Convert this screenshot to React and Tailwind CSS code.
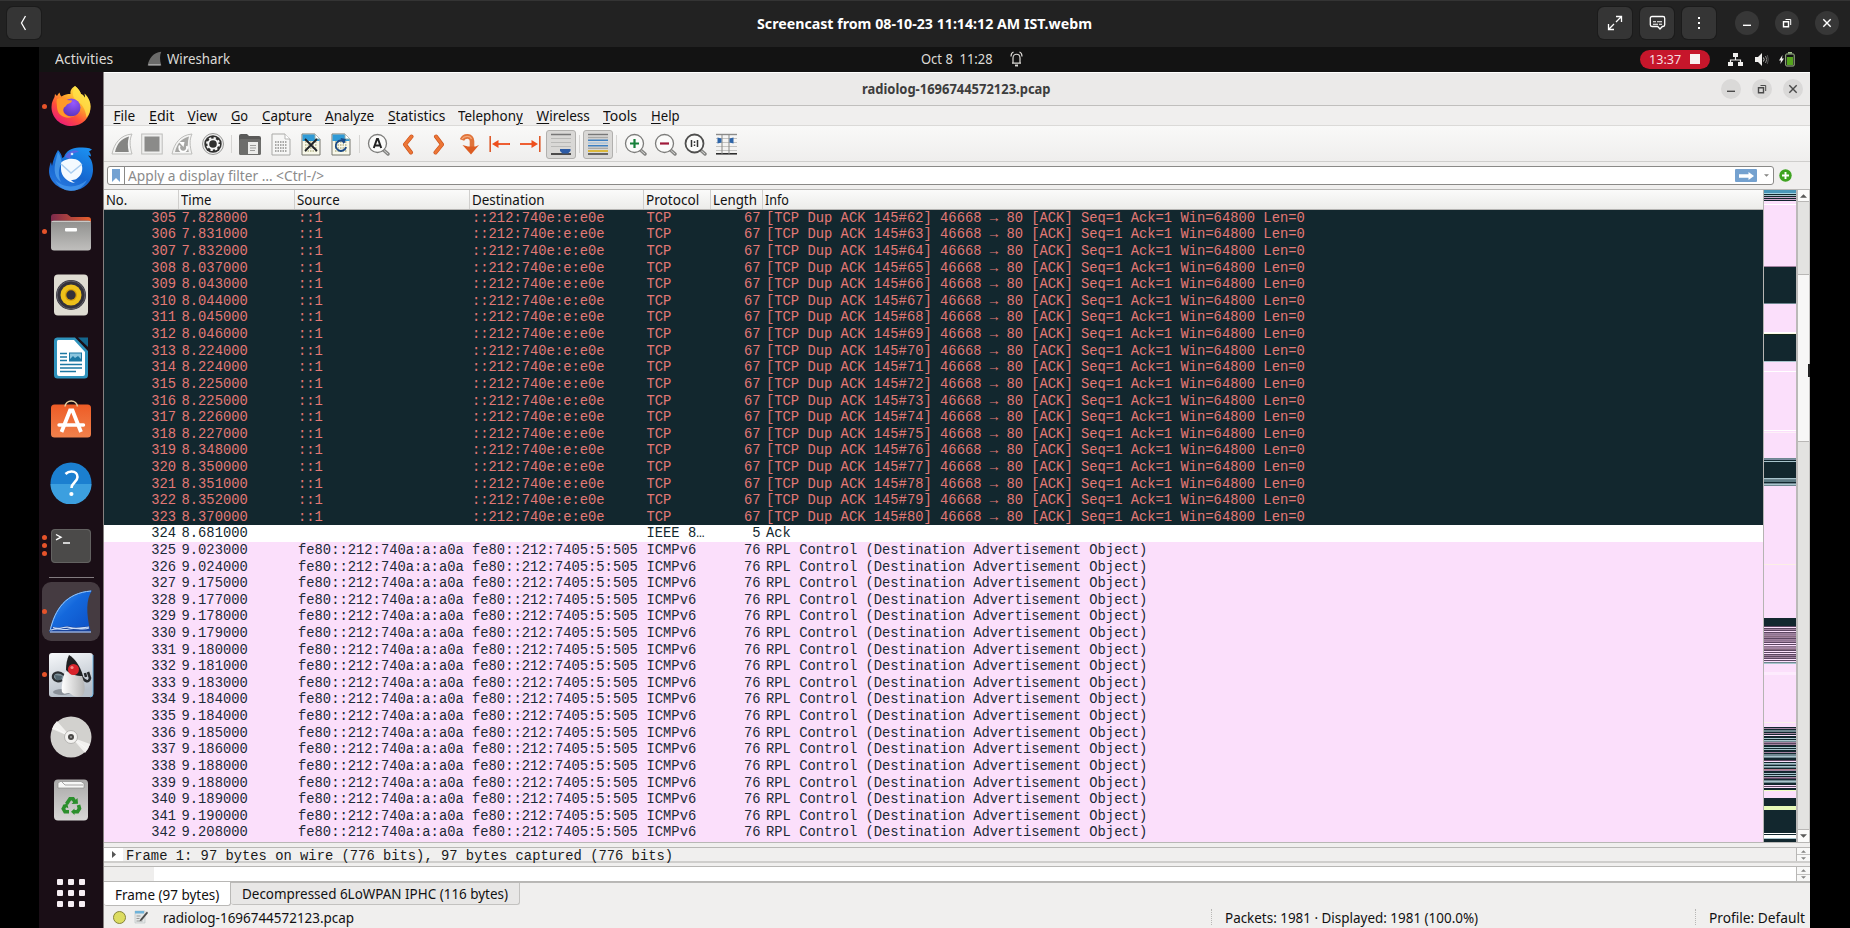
import { useLayoutEffect, useRef, useState } from "react";

/* Text squeezed or stretched to a fixed width. */
function Fit({ w, className = "", children }) {
  const ref = useRef(null);
  const [scale, setScale] = useState(1);
  useLayoutEffect(() => {
    const natural = ref.current.offsetWidth;
    if (natural > 0) setScale(w / natural);
  }, [w]);
  return (
    <span className={"block shrink-0 whitespace-pre " + className} style={{ width: w }}>
      <span ref={ref} className="inline-block origin-left whitespace-pre" style={{ transform: `scaleX(${scale})` }}>
        {children}
      </span>
    </span>
  );
}

/* ---------- packet data ---------- */
const tcpTimes = [
  "7.828000", "7.831000", "7.832000", "8.037000", "8.043000", "8.044000", "8.045000", "8.046000", "8.224000", "8.224000",
  "8.225000", "8.225000", "8.226000", "8.227000", "8.348000", "8.350000", "8.351000", "8.352000", "8.370000",
];
const rplTimes = [
  "9.023000", "9.024000", "9.175000", "9.177000", "9.178000", "9.179000", "9.180000", "9.181000", "9.183000",
  "9.184000", "9.184000", "9.185000", "9.186000", "9.188000", "9.188000", "9.189000", "9.190000", "9.208000",
];
const rows = [
  ...tcpTimes.map((t, i) => ({
    no: 305 + i, t, src: "::1", dst: "::212:740e:e:e0e", p: "TCP", len: 67, kind: "tcp",
    pre: `[TCP Dup ACK 145#${62 + i}] 46668 `, post: " 80 [ACK] Seq=1 Ack=1 Win=64800 Len=0",
  })),
  { no: 324, t: "8.681000", src: "", dst: "", p: "IEEE 8", len: 5, kind: "ack", pre: "Ack" },
  ...rplTimes.map((t, i) => ({
    no: 325 + i, t, src: "fe80::212:740a:a:a0a", dst: "fe80::212:7405:5:505", p: "ICMPv6", len: 76, kind: "rpl",
    pre: "RPL Control (Destination Advertisement Object)",
  })),
];
const rowTone = {
  tcp: "bg-[#12272e] text-[#e27976]",
  ack: "bg-white text-[#12272e]",
  rpl: "bg-[#fbdffb] text-[#1c2a38]",
};

function Row({ r }) {
  return (
    <div className={"grid h-[16.61px] shrink-0 grid-cols-[74px_116px_175px_174px_68px_51px_1fr] items-center pt-px font-['Liberation_Mono',monospace] text-[13.82px] leading-[15px] whitespace-pre " + rowTone[r.kind]}>
      <span className="pr-[2px] text-right">{r.no}</span>
      <span className="pl-[3.5px]">{r.t}</span>
      <span className="pl-[4px]">{r.src}</span>
      <span className="pl-[3px]">{r.dst}</span>
      <span className="pl-[3.5px]">{r.p}{r.kind === "ack" && "…"}</span>
      <span className="pr-[1.500px] text-right">{r.len}</span>
      <span className="pl-[4px]">
        {r.pre}
        {r.kind === "tcp" && <span className="inline-block w-[8.29px] text-center">→</span>}
        {r.post}
      </span>
    </div>
  );
}

/* ---------- minimap ---------- */
const D = "#12272e", P = "#fbdffb", W = "#ffffff", G = "#6e8790", T = "#a8c4cc", M = "#a283a0", K = "#5c4661";
const bands = [
  [0, 3, "#4996b8"], [3, 1, "#a5d3e0"], [4, 1, D], [5, 1, T], [6, 1, D], [7, 1, "#caa8cb"], [8, 1, D], [9, 1, "#caa8cb"], [10, 1, D],
  [14, 1, W], [76, 1, M], [77, 36, D], [113, 1, G], [142, 1, W], [143, 1, "#fffbe8"], [144, 1, "#14281a"], [145, 15, D], [145, 26, D],
  [171, 1, T], [181, 1, W], [240, 1, W], [242, 1, "#fdf0f8"], [268, 1, G], [269, 1, "#7a8ba0"], [270, 1, D], [271, 1, T], [272, 15, D],
  [287, 1, D], [288, 1, T], [289, 1, G], [290, 2, "#5c7a82"], [292, 1, D], [293, 1, G], [294, 1, T], [295, 1, G], [374, 1, "#fbefe6"],
  [428, 8, D], [472, 1, G], [473, 1, T], [482, 3, "#fdebfd"], [532, 1, "#f8f2e8"],
  [600, 1, "#ecffc0"], [608, 8, D], [616, 4, "#e5f9b8"], [620, 23, D], [643, 1, W], [644, 1, D], [645, 3, W], [648, 1, T], [649, 3, D],
];
const seqA = [K, P, K, M, K, P, K, M, "#8f7591", M, "#85697f", M, K, M, "#8f7591", M, K, P, K, P, "#8f7591", M, M, "#85697f", K, P, K, P, K, M, K, M, K, P, K, P];
const seqB = [
  D, M, D, G, G, D, M, D, P, D, D, T, D, T, G, M, K, M, D, D, T, D, T, D, D, M, D, G, G, T, G, D,
  D, K, P, D, T, G, D, T, G, D, "#b27d8d", M, D, D, T, D, T, D, M, K, D, G, T, G, D, D, P, K, P, D, D,
];

function Minimap() {
  return (
    <svg className="block h-[652px] w-[32px]" viewBox="0 0 32 652" shapeRendering="crispEdges">
      <rect width="32" height="652" fill={P} />
      {bands.map(([y, h, c], i) => <rect key={i} y={y} width="32" height={h} fill={c} />)}
      {seqA.map((c, i) => <rect key={"a" + i} y={436 + i} width="32" height="1" fill={c} />)}
      {seqB.map((c, i) => <rect key={"b" + i} y={537 + i} width="32" height="1" fill={c} />)}
    </svg>
  );
}

/* ---------- dock icons ---------- */
const Firefox = () => (
  <svg width="42" height="42" viewBox="0 0 42 42">
    <defs>
      <linearGradient id="ff1" x1=".85" y1=".1" x2=".25" y2="1">
        <stop offset="0" stopColor="#fff04a" /><stop offset=".35" stopColor="#ffab2c" /><stop offset=".65" stopColor="#ff5038" /><stop offset="1" stopColor="#e8187c" />
      </linearGradient>
      <radialGradient id="ff2" cx=".6" cy=".25" r=".8"><stop offset="0" stopColor="#9659ff" /><stop offset="1" stopColor="#5a32b8" /></radialGradient>
    </defs>
    <path d="M25 1c3 2 5 5 6 8 3 1 4 4 4 4 0-2 0-3-.5-4.500 4 4 6 8 6 13 0 11-8 19.500-19 19.500S1.500 33 1.500 22c0-5 2-8 3-10L5 9l2 2c1-2 2-3 2.500-3.500.5 2 1 3 2 4 3-2 6-2.500 9-2.500C20 5 22 3 25 1z" fill="url(#ff1)" />
    <path d="M25 1c3 2 5 5 6 8 3 1 4 4 4 4 0-2 0-3-.5-4.500 4 4 6 8 6 13 0 4-1 8-4 11-1-9-5-14-10-17-5-3-4-10-1.500-14.500z" fill="#ffe14a" opacity=".75" />
    <circle cx="21.500" cy="22.500" r="9" fill="url(#ff2)" />
    <path d="M7 14c3-2 8-1 10 1l5 .5c0 2-3 3-5 4-1 1-1 2-3 3-3 6 4 11 11 8-5 4-17 3-18-8 0-3-1-6 0-8.500z" fill="#ff9a28" />
  </svg>
);

const Thunderbird = () => (
  <svg width="46" height="46" viewBox="0 0 46 46">
    <defs><linearGradient id="tb" x1=".8" y1="0" x2=".3" y2="1"><stop offset="0" stopColor="#1b8ff0" /><stop offset=".6" stopColor="#1566cf" /><stop offset="1" stopColor="#2a7ae0" /></linearGradient></defs>
    <path d="M10 4c2 2 4 5 4 8l2-1c2-6 8-9.500 15-9.500 5 0 10 0 13 2l-3 2c1 1 2 3 2 5-1-.5-2-1-3-1 4 4 5 9 5 14 0 12-9 21-21 21S1 36 1 25c0-3 1-7 2-9l1 4c1-6 3-11 6-16z" fill="url(#tb)" />
    <path d="M8 14c-3 10-1 18 5 22-3-6-3-14 1-19-1-5-2-8-4-11z" fill="#5aaaf2" opacity=".65" />
    <path d="M17 11c3-6 10-8 14-5-6 0-9 4-9 7z" fill="#6a5fe0" opacity=".8" />
    <circle cx="24" cy="8" r="1.300" fill="#cfe8ff" />
    <path d="M13 17c3-4 13-6 18-2 4 3 4 9 2 13-3 5-6 6-10 6 1 1 2 2 4 3-8-1-14-7-14-14z" fill="#f4faff" />
    <path d="M13 18l10 9 11-9" fill="none" stroke="#a9cdf0" strokeWidth="1.500" />
    <path d="M7 34c8 8 22 9 32 0-4 8-11 11-16 11S11 42 7 34z" fill="#4a9df0" opacity=".7" />
  </svg>
);

const Files = () => (
  <svg width="42" height="42" viewBox="0 0 42 42">
    <defs><linearGradient id="fo" x2="1"><stop offset="0" stopColor="#7c2a4c" /><stop offset="1" stopColor="#e8602c" /></linearGradient>
      <linearGradient id="fg" y2="1" x2="0"><stop offset="0" stopColor="#8f8f8d" /><stop offset="1" stopColor="#c0bfbd" /></linearGradient></defs>
    <path d="M1 6a3 3 0 013-3h13l4 3h17a3 3 0 013 3v16H1z" fill="url(#fo)" />
    <rect x="1" y="9.500" width="40" height="30" rx="3" fill="url(#fg)" />
    <rect x="1.500" y="10" width="39" height="1" rx=".5" fill="#c9c8c6" />
    <rect x="15" y="17" width="12" height="3.500" rx="1" fill="#fff" />
  </svg>
);

const Rhythmbox = () => (
  <svg width="36" height="42" viewBox="0 0 36 42">
    <rect x="1" y=".5" width="34" height="41" rx="4" fill="#dfdcd2" />
    <circle cx="18" cy="21" r="15" fill="#34323a" /><circle cx="18" cy="21" r="14" fill="none" stroke="#62606a" />
    <circle cx="18" cy="21" r="10.500" fill="#eec11b" /><circle cx="18" cy="21" r="6" fill="#d79f08" /><circle cx="18" cy="21" r="4.700" fill="#33313a" />
  </svg>
);

const Writer = () => (
  <svg width="36" height="42" viewBox="0 0 36 42">
    <path d="M4 .5h18L35 14v24a3.500 3.500 0 01-3.500 3.500h-27A3.500 3.500 0 011 38V4A3.500 3.500 0 014 .5z" fill="#2f93bd" />
    <path d="M5 3h16l11 12v22a2 2 0 01-2 2H6a2 2 0 01-2-2V5a2 2 0 011-2z" fill="#fff" />
    <path d="M25 .5h10V10z" fill="#14668d" />
    <g stroke="#1d78a3" strokeWidth="1.300"><path d="M7 16.500h7M7 20h7M7 23.500h7M7 27.500h22M7 31h22M7 34.500h16" /></g>
    <rect x="16.500" y="16" width="12" height="8" fill="#8cc5de" stroke="#1d78a3" /><path d="M17 24v-2l3-3 2 2 3-2 3 3v2z" fill="#1d78a3" />
  </svg>
);

const Software = () => (
  <svg width="42" height="42" viewBox="0 0 42 42" className="-mt-[3px]">
    <defs><linearGradient id="sw" y2="1" x2="0"><stop offset="0" stopColor="#ee5c26" /><stop offset="1" stopColor="#f0814c" /></linearGradient></defs>
    <rect x="1" y="6.500" width="40" height="33" rx="3.500" fill="url(#sw)" />
    <path d="M15 8.500a6.300 6.300 0 0112.500 0" fill="none" stroke="#e6cfa0" strokeWidth="1.600" />
    <g fill="none" stroke="#fff" strokeWidth="3.800"><path d="M11.500 34L20 12.500h2.500L31 34" /><path d="M9 27h24.500" strokeLinecap="round" strokeWidth="3.400" /></g>
  </svg>
);

const Help = () => (
  <svg width="42" height="42" viewBox="0 0 42 42">
    <circle cx="21" cy="21" r="20.500" fill="#1b7fd0" /><path d="M.5 22a20.500 20.500 0 0041 0z" fill="#3c9fdf" />
    <path d="M15.500 12c2-2 4-2.500 6-2.500 4 0 6 2.500 6 5.500 0 5-6 5.500-6 11" fill="none" stroke="#fff" strokeWidth="2.600" /><circle cx="21.400" cy="32" r="2.100" fill="#fff" />
  </svg>
);

const Terminal = () => (
  <svg width="42" height="36" viewBox="0 0 42 36">
    <rect x="1" y="1" width="40" height="34" rx="4" fill="#4b4a49" /><rect x="1.500" y="1.500" width="39" height="33" rx="3.500" fill="none" stroke="#636261" />
    <path d="M6 6.500l5 2.700-5 2.700M13 15h7" fill="none" stroke="#fff" strokeWidth="1.400" />
  </svg>
);

const WiresharkFin = () => (
  <svg width="46" height="46" viewBox="0 0 46 46">
    <defs><linearGradient id="wf" x2="1" y2="1"><stop offset="0" stopColor="#4aa0f5" /><stop offset=".45" stopColor="#1468dc" /><stop offset="1" stopColor="#0c4fc4" /></linearGradient></defs>
    <path d="M1.500 43C6 20 18 3 44 1.500c-6 9-6 22-1.500 41.500z" fill="url(#wf)" />
    <path d="M2 42C7 20 18 4 43 2" fill="none" stroke="#9bc8f7" strokeWidth="1" />
    <path d="M1.500 43.500l3-6c8 3 12-2 18 0s14-1 19 0l1.500 6z" fill="#1a449c" />
    <path d="M3 41c8-3 11 1 18-1s13 2 20-1M5 38.500c7 3 11-2 17 0s13 0 19-.5M2 43h41" fill="none" stroke="#c9dcf7" strokeWidth="1.100" />
  </svg>
);

const Duke = () => (
  <svg width="46" height="46" viewBox="0 0 46 46">
    <defs><linearGradient id="jv" y2="1" x2=".3"><stop offset="0" stopColor="#f7f9fb" /><stop offset="1" stopColor="#b7bfc9" /></linearGradient>
      <linearGradient id="jb" x2="1"><stop offset="0" stopColor="#fff" /><stop offset="1" stopColor="#b5b5b5" /></linearGradient></defs>
    <rect x="1" y="1" width="44" height="44" rx="3" fill="url(#jv)" /><path d="M45 3v39a3 3 0 01-3 3" fill="none" stroke="#6fb4e0" />
    <ellipse cx="14" cy="40" rx="9" ry="3" fill="#8a9098" />
    <path d="M16 23C10 18 4 21 5 26c2 4 6 4 9 2" fill="#7d9099" stroke="#2b2f33" strokeWidth="2.200" /><path d="M7 23l7 1-1 4-5 0z" fill="#51646e" />
    <path d="M33 24c4 6 8 7 9 2l-2-6M38 25l-1-4" fill="none" stroke="#26282b" strokeWidth="2.600" />
    <path d="M17 20c-2 7-4 14-3 20 3 4 6-1 9 2s8 4 12 1c4-7 0-16-2-22z" fill="url(#jb)" />
    <path d="M21 3c5 3 11 10 14 21-7 0-13-2-17-6 0-6 1-11 3-15z" fill="#1e1f21" />
    <circle cx="25.500" cy="17.500" r="5.500" fill="#d8232b" /><circle cx="24" cy="15.500" r="1.600" fill="#f48a86" />
  </svg>
);

const Disc = () => (
  <svg width="42" height="42" viewBox="0 0 42 42">
    <circle cx="21" cy="21" r="20.500" fill="#d2d1ce" />
    <path d="M21 21L2 13a20.500 20.500 0 015-8zM21 21l19 7a20.500 20.500 0 01-5 9z" fill="#f2f1ef" />
    <path d="M21 21L3 11M21 21l16 12" stroke="#fff" opacity=".6" /><circle cx="21" cy="21" r="6.500" fill="#f3f2f0" stroke="#b5b4b1" /><circle cx="21" cy="21" r="3" fill="#4a4947" /><circle cx="21" cy="21" r="1" fill="#a3a2a0" />
  </svg>
);

const Trash = () => (
  <svg width="36" height="42" viewBox="0 0 36 42">
    <defs><linearGradient id="tr" y2="1" x2="0"><stop offset="0" stopColor="#a9a8a7" /><stop offset="1" stopColor="#d8d7d6" /></linearGradient></defs>
    <rect x="1" y=".5" width="34" height="41" rx="4" fill="url(#tr)" /><path d="M5 9V4.500l2-2h21l3 2V9z" fill="#f7f7f6" stroke="#8d8c8b" strokeWidth=".7" /><path d="M9 3l3 3h18" fill="none" stroke="#a5a4a3" />
    <g fill="none" stroke="#2b8f2c" strokeWidth="3.600">
      <path d="M13.500 25l3.500-5.300h3l2.200 3.600" /><path d="M25.500 26l1 3.500-2 3.300h-3.500" /><path d="M16 32.800h-4l-1.700-3 2-3.800" />
    </g>
    <g fill="#2b8f2c"><path d="M18.500 25l6.500-.3-.5-5.700z" /><path d="M21.500 29.500v6.500l-3.500-3.200z" /><path d="M9.500 26.500l4.800-2.300 1 5z" /></g>
  </svg>
);

function Slot({ dots = 0, active = false, children }) {
  return (
    <div className="relative flex h-[62.8px] shrink-0 items-center justify-center">
      {active && <div className="absolute inset-x-[3px] inset-y-[2px] rounded-[9px] bg-[#453b41]" />}
      {dots > 0 && (
        <div className="absolute top-0 left-[3px] flex h-full flex-col items-center justify-center gap-[3px]">
          {Array.from({ length: dots }, (_, i) => <i key={i} className="block size-[5px] rounded-full bg-[#e5532a]" />)}
        </div>
      )}
      <div className="relative">{children}</div>
    </div>
  );
}

function Dock() {
  return (
    <aside className="flex w-[64px] shrink-0 flex-col bg-[#1a0e16] pt-[3px]">
      <Slot dots={1}><Firefox /></Slot>
      <Slot><Thunderbird /></Slot>
      <Slot dots={1}><Files /></Slot>
      <Slot><Rhythmbox /></Slot>
      <Slot><Writer /></Slot>
      <Slot><Software /></Slot>
      <Slot><Help /></Slot>
      <Slot dots={3}><Terminal /></Slot>
      <div className="mx-auto mb-[2px] h-px w-[45px] shrink-0 bg-[#827b7f]" />
      <Slot dots={1} active><WiresharkFin /></Slot>
      <Slot dots={1}><Duke /></Slot>
      <Slot><Disc /></Slot>
      <Slot><Trash /></Slot>
      <div className="mx-auto mt-[47px] grid grid-cols-3 gap-[5px]">
        {Array.from({ length: 9 }, (_, i) => <i key={i} className="block size-[6px] rounded-[1px] bg-[#f6eef3]" />)}
      </div>
    </aside>
  );
}

/* ---------- toolbar icons ---------- */
const finPath = "M1 21C3 11 9 2 21 1c-2.500 5-2.500 12 0 20z";
const GreyFin = ({ restart }) => (
  <svg width="22" height="23" viewBox="0 0 22 23">
    <path d={finPath} fill="#f4f4f3" stroke="#bdbdbb" /><path d="M4 19C6 11 10 5.500 18 3.500c-1.500 5-1.500 10-.2 15.500z" fill={restart ? "#a6a6a4" : "#858583"} />
    {restart && <g><path d="M8.800 12.500a4 4 0 107 .5" fill="none" stroke="#fff" strokeWidth="1.900" /><path d="M8 9h5.500l-1 5z" fill="#fff" /></g>}
  </svg>
);
const Stop = () => (
  <svg width="22" height="22" viewBox="0 0 22 22"><rect x=".7" y="1" width="20.500" height="20" fill="#efefee" stroke="#bdbdbb" /><rect x="3.500" y="3.500" width="15" height="15" fill="#8b8b89" /></svg>
);
const Gear = () => (
  <svg width="24" height="24" viewBox="0 0 24 24">
    <circle cx="12" cy="12" r="10.500" fill="#eee" stroke="#9a9a98" /><circle cx="12" cy="12" r="8.700" fill="#2f2f2e" />
    <circle cx="12" cy="12" r="4.700" fill="none" stroke="#f5f5f5" strokeWidth="1.800" />
    <circle cx="12" cy="12" r="6" fill="none" stroke="#f5f5f5" strokeWidth="2" strokeDasharray="2.350 2.350" /><circle cx="12" cy="12" r="3" fill="#2f2f2e" />
  </svg>
);
const Folder = () => (
  <svg width="24" height="23" viewBox="0 0 24 23">
    <path d="M1 3q0-2 2-2h6l2 2h10q2 0 2 2v15q0 2-2 2H3q-2 0-2-2z" fill="#5a5a59" /><path d="M1 8q0-2 2-2h18q2 0 2 2v12q0 2-2 2H3q-2 0-2-2z" fill="#6d6d6b" />
    <path d="M10 9h10v12H10z" fill="#ececea" /><path d="M12 12.500h6M12 15h6M12 17.500h5" stroke="#9b9b99" />
  </svg>
);
function Doc({ mark }) {
  const on = Boolean(mark);
  return (
    <svg width="20" height="23" viewBox="0 0 20 23">
      <path d="M1 1h13l5 5v16H1z" fill={on ? "#f8f8ea" : "#f6f6f5"} stroke={on ? "#77776f" : "#a9a9a7"} />
      {on && <path d="M1.500 1.500h12L18.500 6v2h-17z" fill="#2f9ad6" />}
      <path d="M14 1v5h5" fill="#fff" stroke={on ? "#8aa" : "#b5b5b3"} />
      <path d="M4 9h12M4 12h12M4 15h12M4 18h12" stroke={on ? "#c6c6a4" : "#a9a9a7"} strokeWidth="1.800" strokeDasharray="1.500 1" />
      {mark === "x" && <path d="M4 6l12 12M16 6L4 18" stroke="#1e2228" strokeWidth="1.800" />}
      {mark === "r" && <g><path d="M14 9.500a5.200 5.200 0 101 4.500" fill="none" stroke="#1b4a86" strokeWidth="1.900" /><path d="M9.500 5l5.500 1-2.500 5z" fill="#1b4a86" /></g>}
    </svg>
  );
}
const Lens = ({ children, dark }) => (
  <svg width="23" height="23" viewBox="0 0 23 23">
    <path d="M16.500 17l4.500 4" stroke="#858583" strokeWidth="3.400" strokeLinecap="round" /><path d="M16.500 17l4.500 4" stroke="#d6d6d4" strokeWidth="1" />
    <circle cx="10.500" cy="10.500" r="9" fill="#fbfbfa" stroke={dark ? "#4f4f4e" : "#7c7c7a"} strokeWidth={dark ? 1.800 : 1.300} />{children}
  </svg>
);
const Chevron = ({ flip }) => (
  <svg width="12" height="21" viewBox="0 0 12 21" className={flip ? "rotate-180" : ""}><path d="M9.500 2.500L3 10.500l6 8" fill="none" stroke="#c9501b" strokeWidth="4" strokeLinejoin="round" strokeLinecap="round" /><path d="M9.500 2.500L3 10.500l6 8" fill="none" stroke="#ec7636" strokeWidth="2.800" strokeLinejoin="round" strokeLinecap="round" /></svg>
);
const GoTo = () => (
  <svg width="20" height="21" viewBox="0 0 20 21"><path d="M2 6c2-5 10-5 10 1v6" fill="none" stroke="#e0733a" strokeWidth="4.600" /><path d="M2.500 11l5.500 1.500h7.500L19 11l-8 9.500z" fill="#dc5c22" /><path d="M2 5c2-3 8-4 9.500 0" fill="none" stroke="#f4a878" strokeWidth="1.200" /></svg>
);
const Edge = ({ flip }) => (
  <svg width="21" height="18" viewBox="0 0 21 18" className={flip ? "rotate-180" : ""}><path d="M1.200 1v16" stroke="#de5a2b" strokeWidth="1.600" /><path d="M7 9h14" stroke="#ee4f1d" strokeWidth="1.800" /><path d="M3 9l6.500-4v8z" fill="#ee4f1d" /></svg>
);
const AutoScroll = () => (
  <svg width="20" height="22" viewBox="0 0 20 22"><path d="M0 1.500h20" stroke="#777" strokeWidth="1.500" /><path d="M0 5.500h20M0 9.500h20M0 13.500h20" stroke="#b9b9b7" /><path d="M0 21h20" stroke="#1d1d1d" strokeWidth="1.500" /><path d="M9 16h10.500v2L17 20.500h-5.500L9 18z" fill="#2d5ba5" /></svg>
);
const Colorize = () => (
  <svg width="20" height="22" viewBox="0 0 20 22"><g strokeWidth="1.400"><path d="M0 1.500h20" stroke="#777" /><path d="M0 4.500h20" stroke="#a9a9a7" /><path d="M0 7.300h20M0 12.800h20" stroke="#3f80c0" /><path d="M0 10h20" stroke="#a5c3dd" /><path d="M0 15.300h20" stroke="#a9a9a7" /><path d="M0 18h20" stroke="#dcb52a" strokeWidth="1.800" /><path d="M0 21h20" stroke="#333" /></g></svg>
);
const Columns = () => (
  <svg width="21" height="22" viewBox="0 0 21 22"><path d="M0 1.500h21" stroke="#8b8b89" strokeWidth="1.400" /><path d="M0 5.500h21M0 9.500h21M0 13.500h21M0 17.500h21" stroke="#c3c3c1" /><path d="M0 20.800h21" stroke="#222" strokeWidth="1.500" /><path d="M6 1v20M13 1v20" stroke="#8b8b89" /><path d="M1.500 4.500l4 1v4l-4 1zM17.500 4.500l-4 1v4l4 1z" fill="#2d64a8" /></svg>
);

const Tool = ({ w = "w-[30px]", pressed, children }) => (
  <div className={"flex h-[29px] shrink-0 items-center justify-center " + w + (pressed ? " rounded-[3px] border border-[#b1b0ae] bg-[#d9d8d6]" : "")}>{children}</div>
);
const Sep = () => <div className="mx-[3px] h-[18px] w-px shrink-0 bg-[#d6d5d3]" />;

const menus = [["", "F", "ile", 22], ["", "E", "dit", 25], ["", "V", "iew", 30], ["", "G", "o", 17], ["", "C", "apture", 50], ["", "A", "nalyze", 49], ["", "S", "tatistics", 57], ["Telephon", "y", "", 65], ["", "W", "ireless", 53], ["", "T", "ools", 34], ["", "H", "elp", 29]];

const Arrow = ({ up, small }) => (
  <svg width={small ? 5 : 7} height={small ? 3 : 4} viewBox="0 0 8 4" className={up ? "rotate-180" : ""}><path d="M0 0h8L4 4z" fill={small ? "#858583" : "#5a5a58"} /></svg>
);
const MiniScroll = () => (
  <div className="flex w-[14px] shrink-0 flex-col border-l border-[#b8b7b5] bg-[#f8f8f7]">
    <div className="flex flex-1 items-center justify-center border-b border-[#c2c1bf]"><Arrow up small /></div>
    <div className="flex flex-1 items-center justify-center"><Arrow small /></div>
  </div>
);

const WinGlyph = ({ kind, c }) => (
  <svg width="10" height="10" viewBox="0 0 10 10" fill="none" stroke={c} strokeWidth="1.400">
    {kind === "min" && <path d="M1 7.300h8" />}
    {kind === "max" && <g><path d="M1.500 3.700h5v5h-5z" /><path d="M3.500 1.500h5.200V7" strokeWidth="1" /></g>}
    {kind === "close" && <path d="M1.300 1.300l7.400 7.400M8.700 1.300L1.300 8.700" />}
  </svg>
);

const headBtn = "flex h-[32px] w-[34px] shrink-0 items-center justify-center rounded-[6px] bg-[#353535] ring-1 ring-[#1b1b1b]";
const ui = "font-['Noto_Sans','Open_Sans',sans-serif]";

export default function App() {
  return (
    <div className={"flex h-[928px] w-[1850px] flex-col overflow-hidden bg-black " + ui}>
      {/* video player header */}
      <header className="flex h-[47px] shrink-0 items-center border-t border-[#343434] bg-[#222] pb-[2px] pl-[7px] text-white">
        <div className={headBtn}><svg width="8" height="16" viewBox="0 0 8 16"><path d="M5.500 1L1.500 8l4 7" fill="none" stroke="#fff" strokeWidth="1.300" /></svg></div>
        <Fit w={335} className="mb-px ml-[716px] text-[15px] leading-[20px] font-bold">Screencast from 08-10-23 11:14:12 AM IST.webm</Fit>
        <div className="ml-[506px] flex gap-[8px]">
          <div className={headBtn}><svg width="16" height="16" viewBox="0 0 16 16" fill="none" stroke="#fff" strokeWidth="1.300"><path d="M9 1.500h5.500V7M14.500 1.500L9 7M1.500 9v5.500H7M1.500 14.500L7 9" /></svg></div>
          <div className={headBtn}><svg width="17" height="16" viewBox="0 0 17 16" fill="none" stroke="#fff" strokeWidth="1.300"><path d="M3 1.500h11a1.700 1.700 0 011.700 1.700v6.600a1.700 1.700 0 01-1.700 1.700h-.7L11 14l-2.300-2.500H3a1.700 1.700 0 01-1.700-1.700V3.200A1.700 1.700 0 013 1.500z" /><path d="M4 6.700h3M8 6.700h5M4 9.200h5M10 9.200h3" strokeWidth="1.100" /></svg></div>
          <div className={headBtn}><svg width="4" height="14" viewBox="0 0 4 14"><path d="M1 1h2v2H1zM1 6h2v2H1zM1 11h2v2H1z" fill="#fff" /></svg></div>
        </div>
        <div className="ml-[19px] flex gap-[16px]">
          {["min", "max", "close"].map((k) => <div key={k} className="flex size-[24px] items-center justify-center rounded-full bg-[#373737]"><WinGlyph kind={k} c="#fff" /></div>)}
        </div>
      </header>

      <div className="mx-[39px] flex min-h-0 w-[1771px] flex-1 flex-col">
        {/* desktop top bar */}
        <div className="flex h-[25px] shrink-0 items-center bg-[#131313] pb-px pl-[16px] text-[13.5px] leading-[20px] text-[#dcdad6]">
          <Fit w={58}>Activities</Fit>
          <svg className="ml-[34px]" width="15" height="16" viewBox="0 0 22 23"><path d={finPath} fill="#6b6b6a" /><path d="M2 20h18" stroke="#aaa" strokeWidth="2" /></svg>
          <Fit w={63} className="ml-[5px]">Wireshark</Fit>
          <Fit w={72} className="ml-[691px]">{"Oct 8  11:28"}</Fit>
          <svg className="ml-[17px]" width="13" height="16" viewBox="0 0 13 16" fill="none" stroke="#dcdad6" strokeWidth="1.200"><path d="M2 12.200h9M3 12V7c0-5 7-5 7 0v5M1 5.500C1 3 2 1.500 3.500 1M12 5.500C12 3 11 1.500 9.500 1" /><path d="M5 14.500h3" strokeWidth="1.800" /></svg>
          <div className="ml-[617px] flex h-[19px] w-[70px] items-center gap-[9px] rounded-full bg-[#c6162b] pl-[9px] text-[13px] text-[#f7dfe1]"><Fit w={32}>13:37</Fit><i className="block size-[10px] bg-[#f7f0f0]" /></div>
          <svg className="ml-[18px]" width="15" height="13" viewBox="0 0 15 13"><path d="M5 0h5v4H5zM0 9h5v4H0zM10 9h5v4h-5z" fill="#f1f0ee" /><path d="M7.500 4v3M2.500 9V7h10v2" fill="none" stroke="#f1f0ee" strokeWidth="1.200" /></svg>
          <svg className="ml-[12px]" width="14" height="13" viewBox="0 0 14 13"><path d="M0 4h3l4-4v13L3 9H0z" fill="#f1f0ee" /><path d="M8.500 4.500q1.300 2 0 4" fill="none" stroke="#cfcecc" /><path d="M10.500 3q2.500 3.500 0 7" fill="none" stroke="#8b8a88" /><path d="M12.300 2q2 4.500 0 9" fill="none" stroke="#555" /></svg>
          <svg className="ml-[10px]" width="16" height="15" viewBox="0 0 16 15"><path d="M3.500 3L0 8.500h2L1.300 12 5 6.500H3z" fill="#f1f0ee" /><path d="M9 0h4v1.500H9z" fill="#a8c292" /><rect x="6.700" y="2" width="8.500" height="12" rx="1" fill="none" stroke="#a8c292" /><path d="M8 5h6v8H8z" fill="#55a51c" /></svg>
        </div>

        <div className="flex min-h-0 flex-1">
          <Dock />
          <main className="flex min-w-0 flex-1 flex-col border-l border-[#85807f] bg-[#f0efee]">
            {/* title bar */}
            <div className="flex h-[34px] shrink-0 items-center border-t border-b border-t-white border-b-[#c0bfbd] bg-[#ebeae9] pl-[758px] text-[#3d3d3d]">
              <Fit w={189} className="text-[13.3px] leading-[20px] font-bold">radiolog-1696744572123.pcap</Fit>
              <div className="ml-[670px] flex gap-[11px]">
                {["min", "max", "close"].map((k) => <div key={k} className="flex size-[20px] items-center justify-center rounded-full bg-[#dad9d8]"><WinGlyph kind={k} c="#4a4a4a" /></div>)}
              </div>
            </div>
            {/* menu */}
            <nav className="flex h-[20px] shrink-0 items-center gap-[13.5px] border-b border-[#dbdad8] pt-[1px] pl-[9.5px] text-[13.6px] leading-[18px] text-[#111]">
              {menus.map(([a, u, b, w]) => <Fit key={u + b} w={w}>{a}<span className="underline underline-offset-[2px]">{u}</span>{b}</Fit>)}
            </nav>
            {/* toolbar */}
            <div className="flex h-[36px] shrink-0 items-center border-b border-[#cfcecc] bg-linear-to-b from-[#f9f9f8] to-[#efeeed] pt-px pl-[3px]">
              <Tool><GreyFin /></Tool><Tool><Stop /></Tool><Tool><GreyFin restart /></Tool><Tool w="w-[31px]"><Gear /></Tool><Sep />
              <Tool><Folder /></Tool><Tool w="w-[31px]"><Doc /></Tool><Tool><Doc mark="x" /></Tool><Tool><Doc mark="r" /></Tool><Sep />
              <Tool><Lens><path d="M6.800 15L10 6h1l3.200 9M8 12.500h5" fill="none" stroke="#222" strokeWidth="2" /></Lens></Tool>
              <Tool w="w-[30px]"><Chevron /></Tool><Tool w="w-[32px]"><Chevron flip /></Tool><Tool w="w-[29px]"><GoTo /></Tool>
              <Tool w="w-[31px]"><Edge /></Tool><Tool w="w-[31px]"><Edge flip /></Tool>
              <Tool pressed><AutoScroll /></Tool><Sep /><Tool pressed><Colorize /></Tool><Sep />
              <Tool><Lens><path d="M10.500 6v9M6 10.500h9" stroke="#16803a" strokeWidth="2.200" /></Lens></Tool>
              <Tool><Lens><path d="M6 10.500h9" stroke="#a01a3a" strokeWidth="2.200" /></Lens></Tool>
              <Tool w="w-[31px]"><Lens dark><path d="M7.500 7v7M13.500 7v7M10.500 8.300v1.600M10.500 11.500v1.600" stroke="#333" strokeWidth="1.500" /></Lens></Tool>
              <Tool><Columns /></Tool>
            </div>
            {/* display filter */}
            <div className="flex h-[27px] shrink-0 items-center pl-[3px]">
              <div className="flex h-[19px] w-[1667px] shrink-0 items-center rounded-[3px] border border-[#8a8987] bg-white">
                <div className="flex h-full w-[17px] shrink-0 items-center justify-center border-r border-[#8a8987]"><svg width="8" height="13" viewBox="0 0 8 13"><path d="M0 0h8v13L4 9l-4 4z" fill="#74a2d2" /></svg></div>
                <Fit w={196} className="ml-[3px] text-[13.6px] leading-[17px] text-[#8b8b8b]">Apply a display filter … &lt;Ctrl-/&gt;</Fit>
                <div className="ml-auto flex h-[13px] w-[22px] items-center justify-center rounded-[1px] bg-[#74a1cf]"><svg width="15" height="8" viewBox="0 0 15 8"><path d="M0 2.300h9.500V0L15 4 9.500 8V5.700H0z" fill="#fff" /></svg></div>
                <div className="mr-[4px] ml-[7px]"><Arrow small /></div>
              </div>
              <svg className="ml-[5px]" width="13" height="13" viewBox="0 0 13 13"><circle cx="6.500" cy="6.500" r="6.200" fill="#3fa321" /><path d="M6.500 3v7M3 6.500h7" stroke="#fff" strokeWidth="1.900" /></svg>
            </div>
            {/* packet list */}
            <section className="flex h-[654px] shrink-0 border-t border-b border-[#b8b7b5]">
              <div className="flex min-w-0 flex-1 flex-col overflow-hidden bg-[#fbdffb]">
                <div className="grid h-[19.5px] shrink-0 grid-cols-[75px_116px_175px_174px_67px_52px_1fr] border-b border-[#b5b4b2] bg-linear-to-b from-[#fbfbfa] to-[#ececea] text-[13.6px] leading-[19px] text-[#111]">
                  {[["No.", 21], ["Time", 30], ["Source", 43], ["Destination", 73], ["Protocol", 53], ["Length", 44], ["Info", 24]].map(([t, w], i) => (
                    <div key={t} className={"overflow-hidden pl-[2px] " + (i < 6 ? "border-r border-[#d0cfcd]" : "")}><Fit w={w}>{t}</Fit></div>
                  ))}
                </div>
                {rows.map((r) => <Row key={r.no} r={r} />)}
              </div>
              <div className="shrink-0 border-r-2 border-l border-r-[#bbb9b8] border-l-[#b5b4b2]"><Minimap /></div>
              <div className="relative flex w-[11px] shrink-0 flex-col bg-[#e3e3e1]">
                <div className="flex h-[12px] items-center justify-center border-b border-[#b8b7b5] bg-[#fbfbfa]"><Arrow up /></div>
                <div className="mt-[72px] h-[168px] border-y border-[#b8b7b5] bg-[#f7f7f6]" />
                <div className="mt-auto flex h-[13px] items-center justify-center border-t border-[#b8b7b5] bg-[#fbfbfa]"><Arrow /></div>
                <div className="absolute top-[174px] right-[-1px] h-[13px] w-[2px] bg-[#222]" />
              </div>
              <div className="w-px shrink-0 bg-[#c5c4c2]" />
            </section>
            {/* details */}
            <section className="mt-[4px] flex h-[16px] shrink-0 border-t border-b-2 border-t-[#b8b7b5] border-b-[#cfcecc]">
              <div className="flex w-[19px] shrink-0 items-center justify-center bg-white"><svg width="4" height="7" viewBox="0 0 4 7"><path d="M0 0l4 3.500L0 7z" fill="#555" /></svg></div>
              <div className="flex-1 pl-[3px] font-['Liberation_Mono',monospace] text-[13.82px] leading-[16px] whitespace-pre text-[#1a1a1a]">Frame 1: 97 bytes on wire (776 bits), 97 bytes captured (776 bits)</div>
              <MiniScroll />
            </section>
            <section className="mt-[3px] flex h-[16px] shrink-0 border-y border-[#b8b7b5] bg-white">
              <div className="w-[50px] shrink-0 bg-[#efeeed]" /><div className="flex-1" /><MiniScroll />
            </section>
            {/* byte view tabs */}
            <div className="flex h-[24px] shrink-0 items-start text-[13.6px] text-[#111]">
              <div className="h-[24px] w-[127px] rounded-b-[3px] border-r border-b border-[#bab9b7] bg-white pl-[11px] leading-[25px]"><Fit w={104}>Frame (97 bytes)</Fit></div>
              <div className="flex h-[23px] flex-1 items-start border-t border-[#bab9b7]">
                <div className="h-[22px] w-[289px] rounded-b-[3px] border-r border-b border-[#c3c2c0] bg-[#e8e7e6] pl-[11px] leading-[21px]"><Fit w={266}>Decompressed 6LoWPAN IPHC (116 bytes)</Fit></div>
              </div>
            </div>
            {/* status bar */}
            <footer className="flex h-[22px] shrink-0 items-center pl-[9px] text-[13.6px] leading-[20px] text-[#111]">
              <i className="block size-[13px] shrink-0 rounded-full border border-[#85843a] bg-[#dcdc60]" />
              <svg className="ml-[8px] shrink-0" width="14" height="14" viewBox="0 0 14 14"><path d="M1 1h10v12H1z" fill="#e3e6e6" stroke="#bfc5c5" strokeWidth=".7" /><path d="M1 1h9v2.500H1z" fill="#6fb3d9" /><path d="M2.500 6h4M2.500 8.500h3M2.500 11h6" stroke="#999" /><path d="M13 1.500L6.500 9l-1 2.300L8 10.200 14 3z" fill="#4a4a4a" /></svg>
              <Fit w={191} className="mt-[2px] ml-[15px]">radiolog-1696744572123.pcap</Fit>
              <div className="ml-[857px] h-[16px] w-0 border-l border-dotted border-[#b8b7b5]" />
              <Fit w={253} className="mt-[2px] ml-[13px]">Packets: 1981 · Displayed: 1981 (100.0%)</Fit>
              <div className="ml-auto h-[16px] w-0 border-l border-dotted border-[#b8b7b5]" />
              <Fit w={96} className="mt-[2px] mr-[5px] ml-[13px]">Profile: Default</Fit>
            </footer>
          </main>
        </div>
      </div>
    </div>
  );
}
